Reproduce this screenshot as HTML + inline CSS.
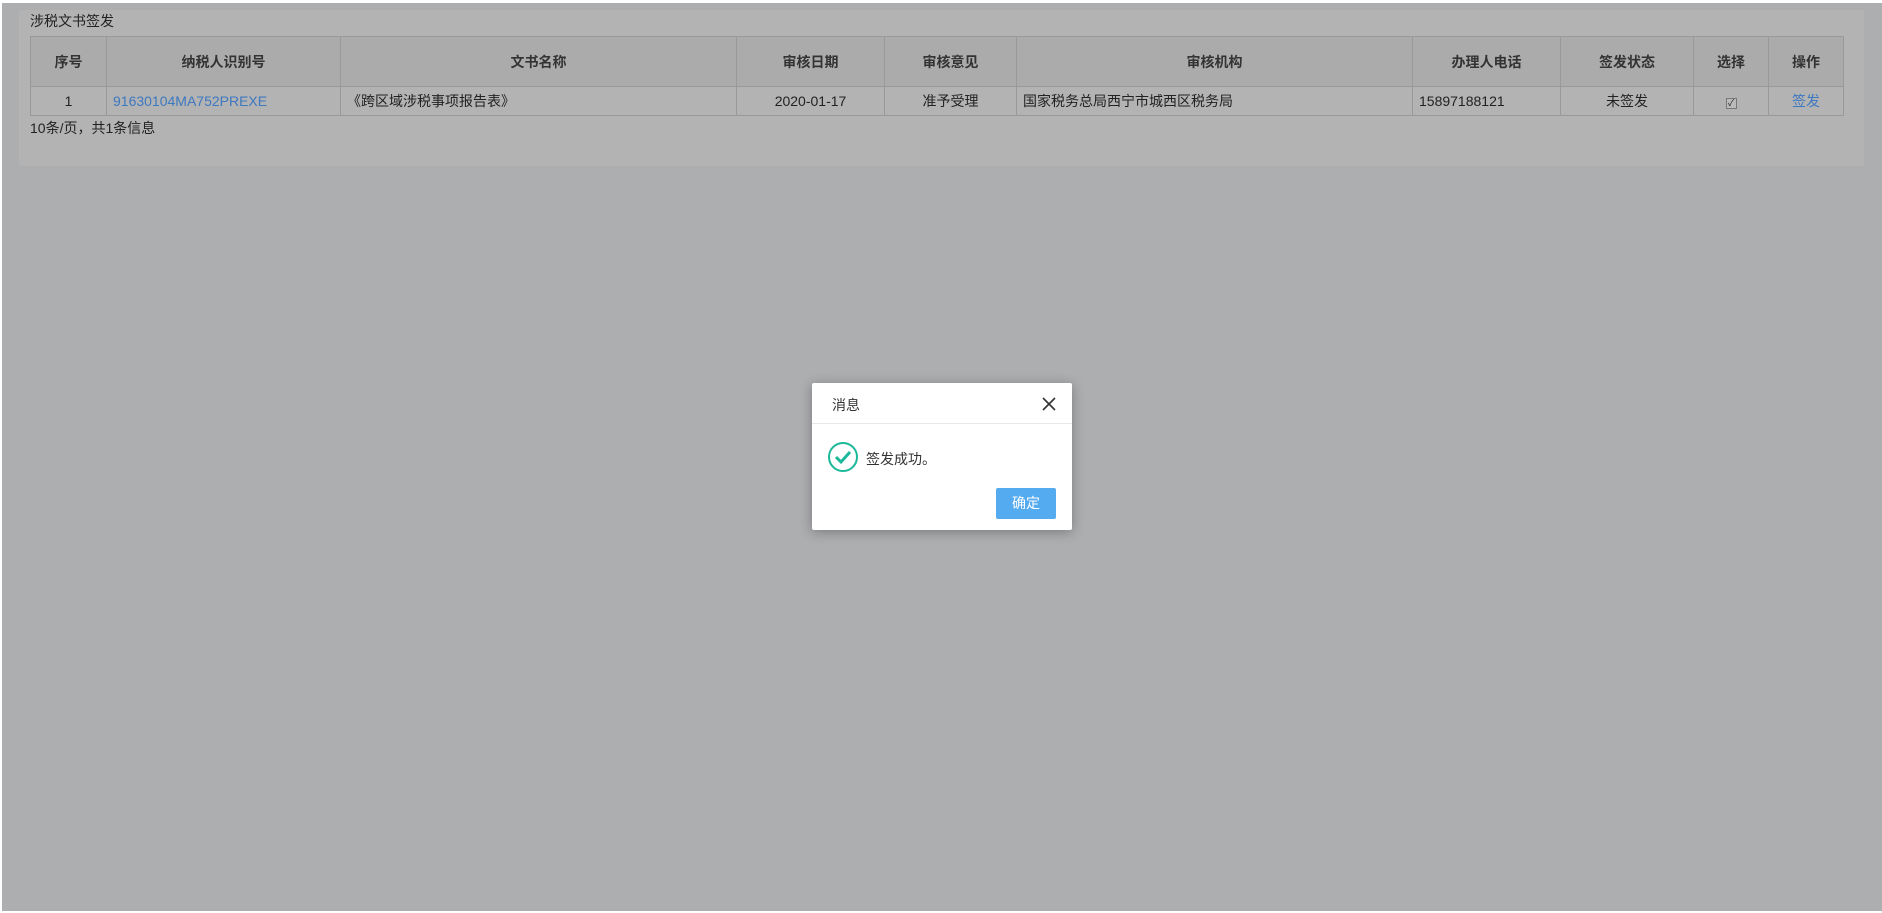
<!DOCTYPE html>
<html><head><meta charset="utf-8"><style>
*{margin:0;padding:0;box-sizing:border-box}
html,body{width:1882px;height:913px;overflow:hidden;background:#fff;font-family:"Liberation Sans","Noto Sans CJK SC",sans-serif;}
#bg{position:absolute;left:2px;top:3px;width:1880px;height:908px;background:#adaeb0}
#panel{position:absolute;left:19px;top:10px;width:1845px;height:156px;background:#b3b3b3}
#title{position:absolute;left:30px;top:11px;font-size:14px;color:#222}
table{position:absolute;left:30px;top:36px;border-collapse:collapse;font-size:14px;color:#222}
td,th{border:1px solid #999;height:50px;text-align:center;padding:0 6px}
th{background:#ababab;font-weight:bold;color:#333}
tr.r td{height:29px;background:#b3b3b3}
.l{text-align:left}
.a{color:#3d78c0}
#pg{position:absolute;left:30px;top:118px;font-size:14px;color:#222}
#modal{position:absolute;left:812px;top:383px;width:260px;height:147px;background:#fff;border-radius:2px;box-shadow:0 2px 12px rgba(0,0,0,.3)}
#mh{height:41px;border-bottom:1px solid #e8e8e8;font-size:14px;color:#333;padding:12px 0 0 20px}
#x{position:absolute;right:16px;top:14px}
#ic{position:absolute;left:15px;top:58px}
#msg{position:absolute;left:54px;top:66px;font-size:14px;color:#333}
#btn{position:absolute;left:184px;top:105px;width:60px;height:31px;background:#55abf0;color:#fff;font-size:14px;text-align:center;line-height:31px;border-radius:2px}
</style></head><body>
<div id="bg"></div>
<div id="panel"></div>
<div id="title">涉税文书签发</div>
<table>
<tr><th style="width:76px">序号</th><th style="width:234px">纳税人识别号</th><th style="width:396px">文书名称</th><th style="width:148px">审核日期</th><th style="width:132px">审核意见</th><th style="width:396px">审核机构</th><th style="width:148px">办理人电话</th><th style="width:133px">签发状态</th><th style="width:75px">选择</th><th style="width:75px">操作</th></tr>
<tr class="r"><td>1</td><td class="l a">91630104MA752PREXE</td><td class="l">《跨区域涉税事项报告表》</td><td>2020-01-17</td><td>准予受理</td><td class="l">国家税务总局西宁市城西区税务局</td><td class="l">15897188121</td><td>未签发</td><td><span style="display:inline-block;width:11px;height:11px;border:1px solid #777;font-size:9px;line-height:9px;background:#bbb">✓</span></td><td class="a">签发</td></tr>
</table>
<div id="pg">10条/页，共1条信息</div>
<div id="modal">
<div id="mh">消息</div>
<svg id="x" width="14" height="14" viewBox="0 0 14 14"><path d="M1 1L13 13M13 1L1 13" stroke="#333" stroke-width="1.6"/></svg>
<svg id="ic" width="32" height="32" viewBox="0 0 32 32"><circle cx="16" cy="16" r="14" fill="none" stroke="#1bb99a" stroke-width="2"/><path d="M9 16l5 5 9-10" fill="none" stroke="#1bb99a" stroke-width="3"/></svg>
<div id="msg">签发成功。</div>
<div id="btn">确定</div>
</div>
</body></html>
